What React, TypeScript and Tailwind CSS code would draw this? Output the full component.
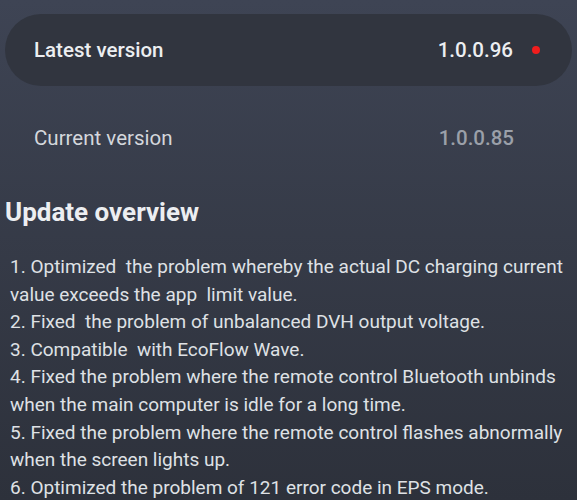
import React from "react";

const items = [
  "1. Optimized\u00a0 the problem whereby the actual DC charging current value exceeds the app\u00a0 limit value.",
  "2. Fixed\u00a0 the problem of unbalanced DVH output voltage.",
  "3. Compatible\u00a0 with EcoFlow Wave.",
  "4. Fixed the problem where the remote control Bluetooth unbinds when the main computer is idle for a long time.",
  "5. Fixed the problem where the remote control flashes abnormally when the screen lights up.",
  "6. Optimized the problem of 121 error code in EPS mode.",
];

export default function App() {
  return (
    <div
      className="w-[577px] h-[500px] overflow-hidden bg-gradient-to-b from-[#3e4454] to-[#2d313b]"
      style={{ fontFamily: "Roboto, 'Liberation Sans', sans-serif" }}
    >
      <div className="pt-[14px] px-[5px]">
        <div className="h-[72px] rounded-full bg-[#31353f] flex items-center pl-[29px] pr-[32px]">
          <span className="text-[20.5px] font-medium text-[#eceef1]">Latest version</span>
          <span className="ml-auto text-[20.5px] font-medium text-[#eceef1]">1.0.0.96</span>
          <span className="ml-[19px] w-[8px] h-[8px] rounded-full bg-[#f01d1d]" />
        </div>
      </div>
      <div className="h-[104px] flex items-center pl-[34px] pr-[63px]">
        <span className="text-[20.5px] text-[#d4d7dc]">Current version</span>
        <span className="ml-auto text-[20.5px] font-medium text-[#9ba0a9]">1.0.0.85</span>
      </div>
      <div className="pl-[5px] mt-[6px] text-[26px] font-bold text-[#eceef1] leading-[32px]">
        Update overview
      </div>
      <div className="pl-[10px] pr-[6px] mt-[25px] text-[19px] leading-[27.6px] text-[#dfe1e5]">
        {items.map((t, i) => (
          <div key={i}>{t}</div>
        ))}
      </div>
    </div>
  );
}
